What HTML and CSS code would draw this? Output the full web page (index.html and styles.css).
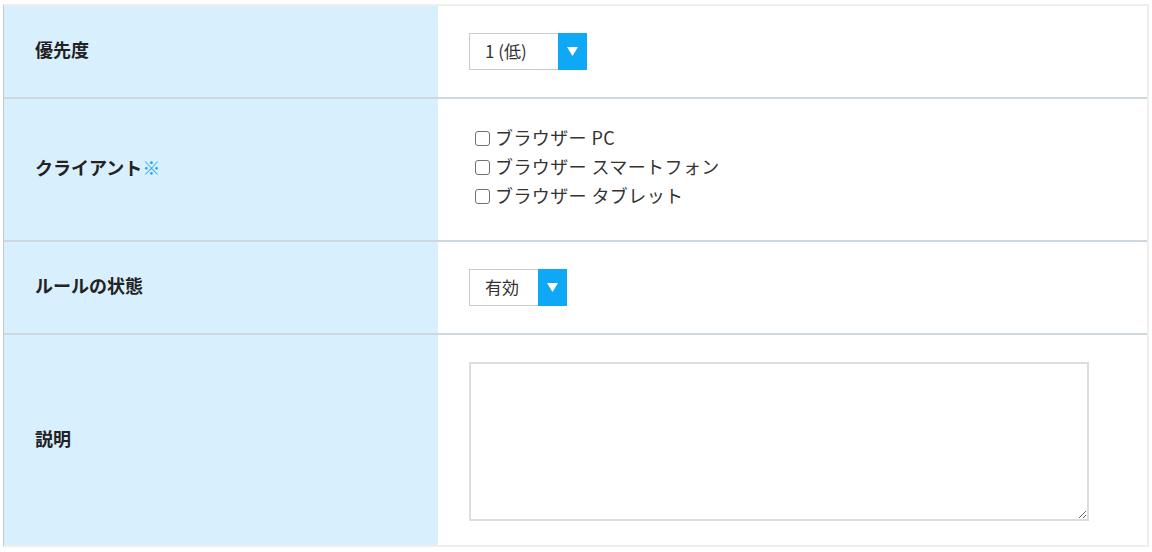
FILE: index.html
```html
<!DOCTYPE html>
<html lang="ja">
<head>
<meta charset="utf-8">
<link rel="stylesheet" href="styles.css">
</head>
<body>
<div class="form">
  <div class="row row-short">
    <div class="label">優先度</div>
    <div class="value">
      <div class="select select-wide">
        <span class="select-text">1 (低)</span>
        <span class="select-btn"><svg width="11" height="9" viewBox="0 0 11 9"><path d="M0 0H11L5.5 9Z" fill="#fff"/></svg></span>
      </div>
    </div>
  </div>
  <div class="row row-tall">
    <div class="label">クライアント<span class="req">※</span></div>
    <div class="value">
      <div class="checks">
        <label class="check"><span class="box"></span>ブラウザー PC</label>
        <label class="check"><span class="box"></span>ブラウザー スマートフォン</label>
        <label class="check"><span class="box"></span>ブラウザー タブレット</label>
      </div>
    </div>
  </div>
  <div class="row row-short">
    <div class="label">ルールの状態</div>
    <div class="value">
      <div class="select select-narrow">
        <span class="select-text">有効</span>
        <span class="select-btn"><svg width="11" height="9" viewBox="0 0 11 9"><path d="M0 0H11L5.5 9Z" fill="#fff"/></svg></span>
      </div>
    </div>
  </div>
  <div class="row row-last">
    <div class="label">説明</div>
    <div class="value value-area">
      <textarea class="area"></textarea>
    </div>
  </div>
</div>
</body>
</html>
```
FILE: styles.css
```css
html, body {
  margin: 0;
  padding: 0;
  background: #ffffff;
}
body {
  font-family: "Noto Sans CJK JP", "Noto Sans", sans-serif;
  color: #333333;
}
.form {
  margin: 4px 0 0 3px;
  width: 1143px;
  border-top: 2px solid #eeeeee;
  border-right: 2px solid #eeeeee;
  border-bottom: 2px solid #eeeeee;
  border-left: 1px solid #c8c8c8;
  background: #ffffff;
}
.row {
  display: flex;
  border-bottom: 2px solid #cdd7de;
}
.row-last {
  border-bottom: none;
}
.label {
  width: 403px;
  flex: none;
  background: #d8effd;
  padding-left: 31px;
  padding-bottom: 5px;
  display: flex;
  align-items: center;
  font-size: 18px;
  font-weight: bold;
  color: #222222;
}
.req {
  color: #1ea7f0;
  font-weight: normal;
}
.value {
  flex: 1;
  padding: 27px 0 27px 31px;
  display: flex;
  align-items: center;
}
.row-short .value {
  height: 37px;
}
.select {
  height: 35px;
  border: 1px solid #cccccc;
  display: flex;
  align-items: stretch;
  font-size: 17px;
  color: #333333;
  background: #fff;
}
.select-wide { width: 116px; }
.select-narrow { width: 96px; }
.select-text {
  flex: 1;
  padding-left: 15px;
  padding-bottom: 3px;
  display: flex;
  align-items: center;
}
.select-btn {
  width: 29px;
  background: #0ea8f7;
  display: flex;
  align-items: center;
  justify-content: center;
  margin: -1px -1px -1px 0;
}
.checks {
  display: flex;
  flex-direction: column;
  padding-left: 6px;
  margin: -4px 0 4px;
}
.check {
  display: flex;
  align-items: center;
  height: 29px;
  font-size: 18px;
  letter-spacing: 0.4px;
  color: #333333;
}
.box {
  width: 15px;
  height: 15px;
  border: 1px solid #707070;
  border-radius: 3px;
  margin-right: 5px;
  margin-top: 3px;
  flex: none;
  box-sizing: border-box;
}
.value-area {
  padding: 27px 0 24px 31px;
}
.area {
  display: block;
  width: 616px;
  height: 155px;
  border: 2px solid #dddddd;
  margin: 0;
  padding: 0;
  resize: both;
  background: #fff;
}
```
